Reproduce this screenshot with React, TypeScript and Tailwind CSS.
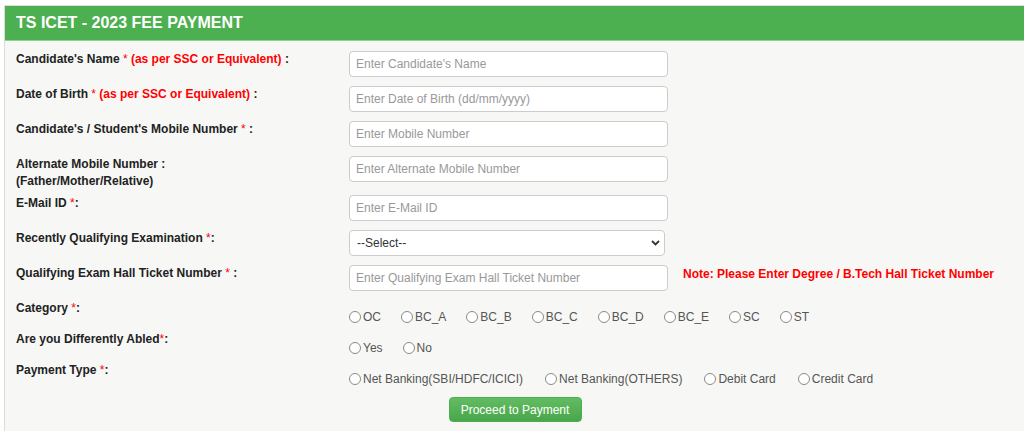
import React from "react"

const labelCls = "w-[333px] shrink-0 mb-[5px] text-[12px] leading-[17px] font-bold text-[#222]"
const inputCls =
  "w-[319px] h-[26px] mb-[9px] px-[6px] bg-white border border-[#ccc] rounded-[4px] text-[12px] text-[#333] placeholder:text-[#999] outline-none font-['Liberation_Sans',Arial,sans-serif]"

function Req({ text }: { text?: string }) {
  return (
    <>
      <span className="text-[#ff0000] font-normal">*</span>
      {text && <span className="text-[#ff0000]"> {text}</span>}
    </>
  )
}

function Radio({ label }: { label: string }) {
  return (
    <span className="flex items-center">
      <span className="w-[12px] h-[12px] rounded-full border border-[#8a8a8a] bg-white mr-[2px]" />
      <span>{label}</span>
    </span>
  )
}

function RadioRow({ label, options, gap }: { label: React.ReactNode; options: string[]; gap: string }) {
  return (
    <div className="flex items-start h-[22px] mb-[9px]">
      <div className={labelCls}>{label}</div>
      <div className={`flex ${gap} pt-[10px] text-[12px] leading-[14px] text-[#555]`}>
        {options.map((o) => (
          <Radio key={o} label={o} />
        ))}
      </div>
    </div>
  )
}

function InputRow({ label, placeholder, extra }: { label: React.ReactNode; placeholder: string; extra?: React.ReactNode }) {
  return (
    <div className="flex items-start">
      <div className={labelCls}>{label}</div>
      <input className={inputCls} placeholder={placeholder} />
      {extra}
    </div>
  )
}

export default function App() {
  return (
    <div className="w-[1024px] h-[431px] overflow-hidden bg-white pt-[5px] pl-[4px] font-['Liberation_Sans',Arial,sans-serif]">
      <div className="w-[1030px] h-[440px] border-l border-t border-[#dcdcdc] bg-[#f7f8f6]">
        <div className="h-[35px] bg-[#4caf50] border-b border-[#8fd293] flex items-center px-[11px] text-white text-[16px] font-bold">
          TS ICET - 2023 FEE PAYMENT
        </div>
        <div className="pt-[10px] px-[11px]">
          <InputRow
            label={
              <>
                Candidate's Name <Req text="(as per SSC or Equivalent)" /> :
              </>
            }
            placeholder="Enter Candidate's Name"
          />
          <InputRow
            label={
              <>
                Date of Birth <Req text="(as per SSC or Equivalent)" /> :
              </>
            }
            placeholder="Enter Date of Birth (dd/mm/yyyy)"
          />
          <InputRow
            label={
              <>
                Candidate's / Student's Mobile Number <Req /> :
              </>
            }
            placeholder="Enter Mobile Number"
          />
          <InputRow
            label={
              <>
                Alternate Mobile Number :
                <br />
                (Father/Mother/Relative)
              </>
            }
            placeholder="Enter Alternate Mobile Number"
          />
          <InputRow
            label={
              <>
                E-Mail ID <Req />:
              </>
            }
            placeholder="Enter E-Mail ID"
          />
          <div className="flex items-start">
            <div className={labelCls}>
              Recently Qualifying Examination <Req />:
            </div>
            <div className="w-[316px] h-[26px] mb-[9px] pl-[7px] pr-[4px] bg-white border border-[#ccc] rounded-[4px] flex items-center justify-between text-[12px] text-[#333]">
              <span>--Select--</span>
              <svg width="9" height="6" viewBox="0 0 9 6" fill="none">
                <path d="M1 1l3.5 3.5L8 1" stroke="#333" strokeWidth="1.8" />
              </svg>
            </div>
          </div>
          <InputRow
            label={
              <>
                Qualifying Exam Hall Ticket Number <Req /> :
              </>
            }
            placeholder="Enter Qualifying Exam Hall Ticket Number"
            extra={
              <div className="ml-[15px] text-[12px] leading-[17px] pt-[1px] font-bold text-[#ff0000]">
                Note: Please Enter Degree / B.Tech Hall Ticket Number
              </div>
            }
          />
          <RadioRow
            label={
              <>
                Category <Req />:
              </>
            }
            gap="gap-[20px]"
            options={["OC", "BC_A", "BC_B", "BC_C", "BC_D", "BC_E", "SC", "ST"]}
          />
          <RadioRow
            label={
              <>
                Are you Differently Abled
                <Req />:
              </>
            }
            gap="gap-[20px]"
            options={["Yes", "No"]}
          />
          <RadioRow
            label={
              <>
                Payment Type <Req />:
              </>
            }
            gap="gap-[22px]"
            options={["Net Banking(SBI/HDFC/ICICI)", "Net Banking(OTHERS)", "Debit Card", "Credit Card"]}
          />
          <div className="w-[998px] flex justify-center mt-[13px]">
            <button className="w-[133px] h-[25px] rounded-[4px] border border-[#4cae4c] bg-gradient-to-b from-[#62bd62] to-[#4aa64a] text-white text-[12px]">
              Proceed to Payment
            </button>
          </div>
        </div>
      </div>
    </div>
  )
}
